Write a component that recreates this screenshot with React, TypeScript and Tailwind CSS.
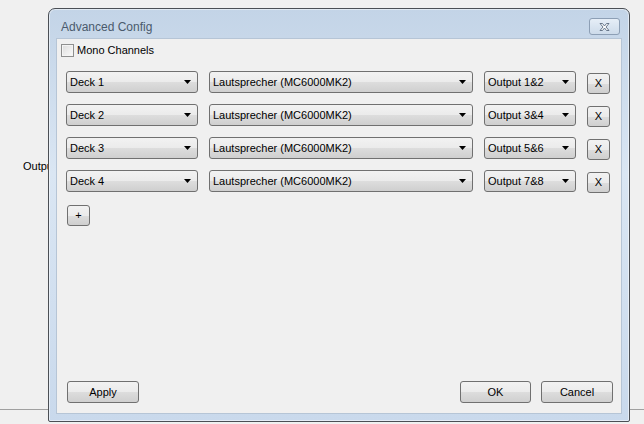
import React from 'react'

const FONT = { fontFamily: '"Liberation Sans", Arial, sans-serif' }

const ROWS = [
  { deck: 'Deck 1', out: 'Output 1&2' },
  { deck: 'Deck 2', out: 'Output 3&4' },
  { deck: 'Deck 3', out: 'Output 5&6' },
  { deck: 'Deck 4', out: 'Output 7&8' },
]

function Arrow() {
  return (
    <svg width="7" height="4" viewBox="0 0 7 4" className="shrink-0">
      <path d="M0 0h7L3.5 4z" fill="#000" />
    </svg>
  )
}

function Combo({ label, width }: { label: string; width: string }) {
  return (
    <div
      className={`${width} h-[22px] shrink-0 flex items-center justify-between pl-[3px] pr-[6px] rounded-[3px] border border-[#707070] bg-[linear-gradient(#f2f2f2_0%,#ebebeb_50%,#dddddd_51%,#cfcfcf_100%)] text-[11px] text-black`}
    >
      <span className="leading-none whitespace-nowrap">{label}</span>
      <Arrow />
    </div>
  )
}

function Button({ label, className }: { label: string; className: string }) {
  return (
    <div
      className={`${className} flex items-center justify-center rounded-[3px] border border-[#707070] bg-[linear-gradient(#f2f2f2_0%,#ebebeb_50%,#dddddd_51%,#cfcfcf_100%)] text-[11px] text-black leading-none`}
    >
      {label}
    </div>
  )
}

export default function App() {
  return (
    <div className="relative w-[644px] h-[424px] overflow-hidden bg-[#f0f0f0]" style={FONT}>
      {/* background app */}
      <span className="absolute left-[23px] top-[158px] text-[11px] text-black">Output</span>
      <div className="absolute left-0 right-0 top-[409px] h-px bg-[#a0a0a0]" />

      {/* dialog window */}
      <div className="absolute left-[48px] top-[8px] w-[582px] h-[414px] flex flex-col rounded-t-[7px] rounded-b-[2px] border border-[#4b4f55] bg-[linear-gradient(#c3d4e7,#dae6f3_40%,#c9d9ec)] shadow-[0_0_0_1px_rgba(255,255,255,0.5)_inset]">
        <div className="h-[29px] shrink-0 flex items-start justify-between pl-[12px] pr-[9px]">
          <span className="text-[12px] text-[#4a5a6c] leading-none mt-[12px]">Advanced Config</span>
          <div className="w-[31px] h-[17px] mt-[9px] flex items-center justify-center rounded-[3px] border border-[#8d9fb5] bg-[linear-gradient(#e6eef7,#cddbea)]">
            <svg width="13" height="10" viewBox="0 0 13 10">
              <path
                d="M2 1.5h2.5L6.5 4l2-2.5H11L8 5l3 3.5H8.5L6.5 6 4.5 8.5H2L5 5z"
                fill="#fff"
                stroke="#5b6b80"
                strokeWidth="0.9"
                strokeLinejoin="round"
              />
            </svg>
          </div>
        </div>

        <div className="flex-1 mx-[7px] mb-[7px] flex flex-col bg-[#f0f0f0] border border-[#b6c5d6]">
          <div className="flex items-center gap-[3px] ml-[4px] mt-[5px]">
            <div className="w-[13px] h-[13px] border border-[#8e8f8f] bg-[linear-gradient(135deg,#dcdcdc,#fbfbfb)] shadow-[inset_0_0_0_1px_#f4f4f4]" />
            <span className="text-[11px] text-black leading-none">Mono Channels</span>
          </div>

          <div className="flex flex-col gap-[11px] mt-[14px] ml-[9px]">
            {ROWS.map(r => (
              <div key={r.deck} className="h-[22px] flex items-start gap-[11px]">
                <Combo label={r.deck} width="w-[132px]" />
                <Combo label="Lautsprecher (MC6000MK2)" width="w-[264px]" />
                <Combo label={r.out} width="w-[92px]" />
                <Button label="X" className="w-[23px] h-[21px] mt-[2px] shrink-0" />
              </div>
            ))}
          </div>

          <div className="ml-[10px] mt-[13px]">
            <Button label="+" className="w-[23px] h-[21px]" />
          </div>

          <div className="mt-auto mb-[10px] flex items-center pl-[10px] pr-[8px]">
            <Button label="Apply" className="w-[72px] h-[22px]" />
            <div className="flex-1" />
            <Button label="OK" className="w-[71px] h-[22px]" />
            <Button label="Cancel" className="w-[72px] h-[22px] ml-[10px]" />
          </div>
        </div>
      </div>
    </div>
  )
}
